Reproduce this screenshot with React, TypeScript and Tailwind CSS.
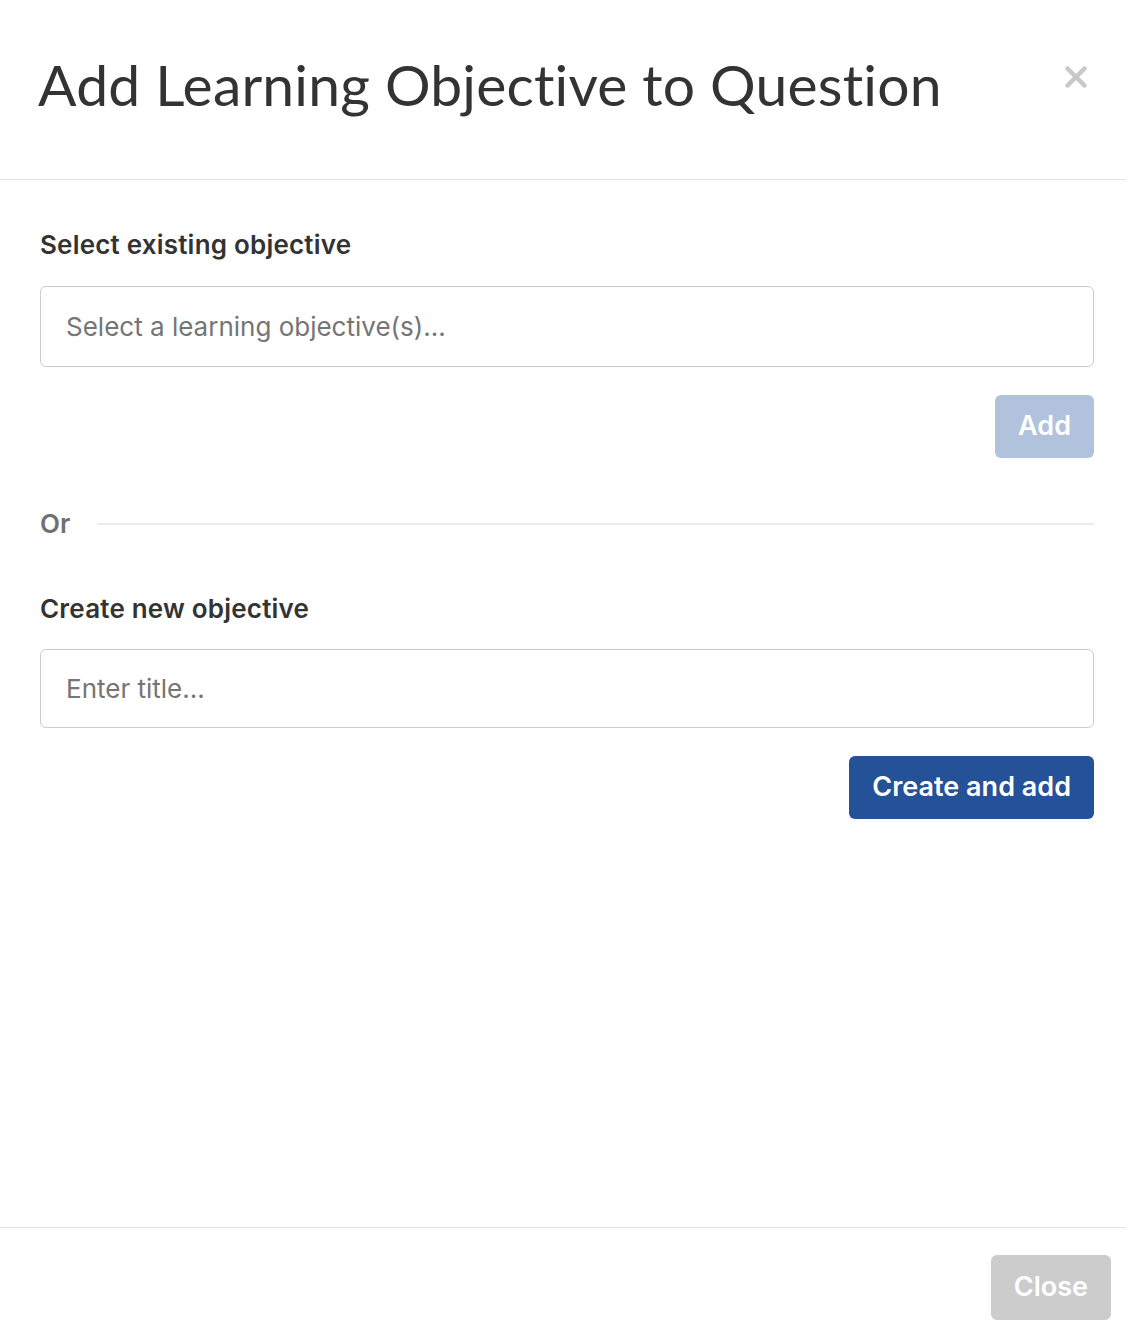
import { X } from "lucide-react"

const titleFont = { fontFamily: "Lato, 'Liberation Sans', sans-serif" }
const bodyFont = { fontFamily: "Inter, 'Liberation Sans', sans-serif" }

const Field = ({ placeholder, tall = false }: { placeholder: string; tall?: boolean }) => (
  <input
    type="text"
    placeholder={placeholder}
    className={
      "block w-full rounded-md border border-[#cccccc] bg-white px-[25px] text-[26px] text-[#333] outline-none placeholder:text-[#757575] " +
      (tall ? "h-[81px]" : "h-[79px]")
    }
    style={bodyFont}
  />
)

export default function App() {
  return (
    <div className="flex min-h-[1338px] w-full flex-col bg-white text-[#333]" style={bodyFont}>
      <header className="flex items-start justify-between border-b border-[#e5e5e5] pb-[57px] pl-[38px] pr-[33px] pt-[46px]">
        <h1 className="text-[57px] leading-[76px] font-normal tracking-[0.2px] text-[#333]" style={titleFont}>
          Add Learning Objective to Question
        </h1>
        <button className="mt-[14px] text-[#c8c8c8]">
          <X className="h-[34px] w-[34px]" strokeWidth={3.2} />
        </button>
      </header>

      <main className="flex flex-1 flex-col pl-[40px] pr-[32px] pt-[47px]">
        <h2 className="mb-[24px] text-[26px] leading-[35px] font-semibold tracking-[0.2px]">Select existing objective</h2>
        <Field placeholder="Select a learning objective(s)..." tall />
        <div className="mt-[28px] flex justify-end">
          <button className="h-[63px] rounded-md bg-[#b1c2dd] px-[23px] text-[27px] font-semibold text-white">
            Add
          </button>
        </div>

        <div className="mt-[50px] flex items-center gap-[27px]">
          <span className="text-[26px] leading-[32px] font-semibold text-[#707070]">Or</span>
          <div className="h-[2px] flex-1 bg-[#ececec]" />
        </div>

        <h2 className="mb-[23px] mt-[51px] text-[26px] leading-[35px] font-semibold tracking-[0.2px]">Create new objective</h2>
        <Field placeholder="Enter title..." />
        <div className="mt-[28px] flex justify-end">
          <button className="h-[63px] rounded-md bg-[#245198] px-[23px] text-[27px] font-semibold text-white">
            Create and add
          </button>
        </div>
      </main>

      <footer className="flex justify-end border-t border-[#e5e5e5] pb-[18px] pr-[15px] pt-[27px]">
        <button className="h-[65px] rounded-md bg-[#cccccc] px-[23px] text-[27px] font-semibold text-white">
          Close
        </button>
      </footer>
    </div>
  )
}
